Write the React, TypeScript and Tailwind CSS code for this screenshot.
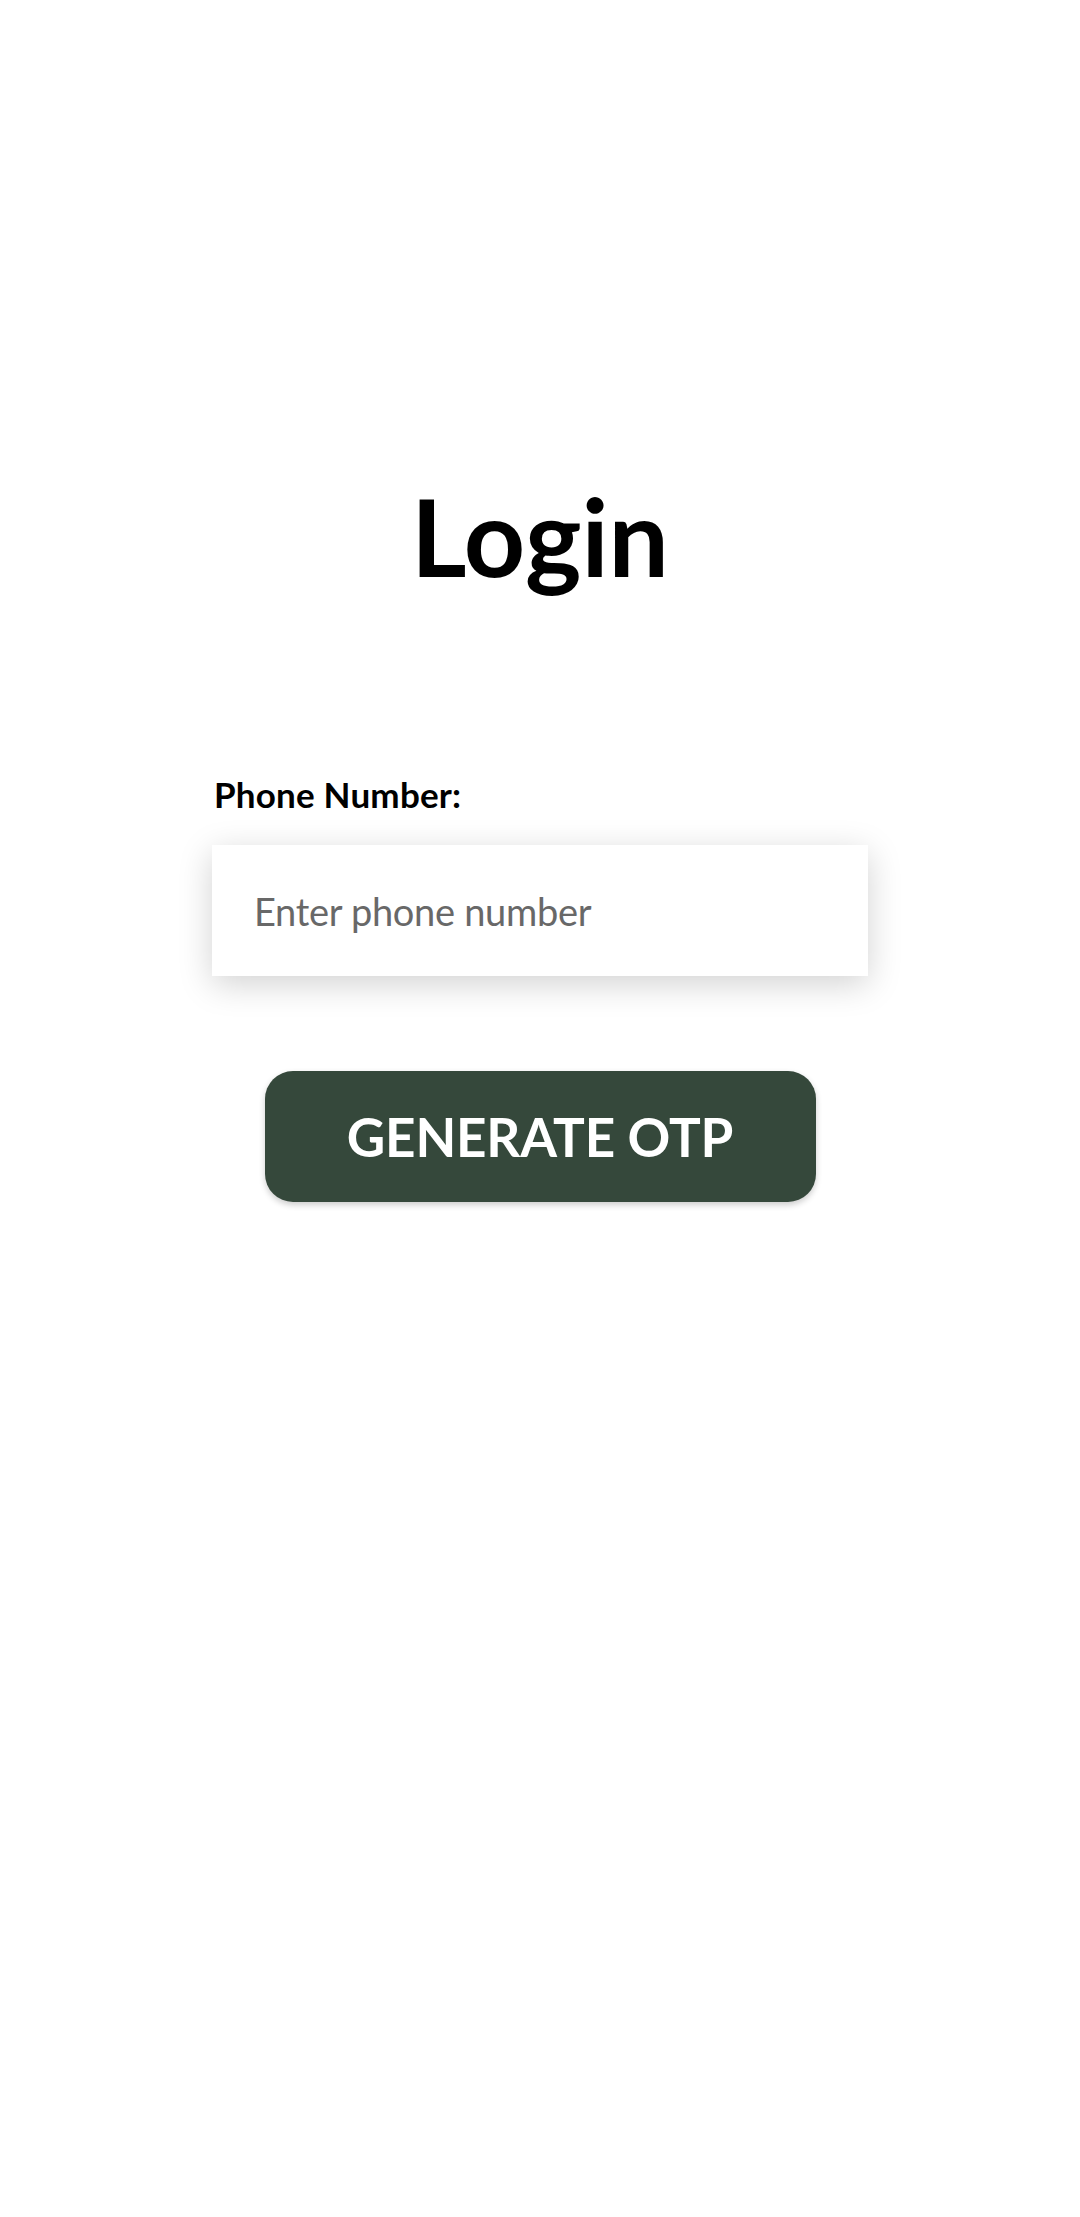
export default function App() {
  return (
    <div className="min-h-[2217px] bg-white font-['Lato','Noto_Sans',sans-serif] flex flex-col items-center pt-[482px]">
      <h1 className="text-[107px] leading-none font-bold text-black">Login</h1>

      <form className="w-[656px] mt-[188px] flex flex-col" onSubmit={(e) => e.preventDefault()}>
        <label htmlFor="phone" className="text-[35px] leading-none font-bold text-black pl-[2px] tracking-[0.2px]">
          Phone Number:
        </label>
        <input
          id="phone"
          type="tel"
          placeholder="Enter phone number"
          className="mt-[33px] h-[131px] w-full bg-white px-[42px] text-[38px] tracking-[-0.3px] text-black placeholder:text-[#686868] outline-none shadow-[0_8px_32px_rgba(0,0,0,0.18)]"
        />
        <button
          type="submit"
          className="mt-[95px] self-center w-[551px] h-[131px] rounded-[28px] bg-[#35483b] text-white text-[53px] font-bold tracking-[-0.2px] shadow-[0_3px_6px_rgba(0,0,0,0.2)]"
        >
          GENERATE OTP
        </button>
      </form>
    </div>
  );
}
